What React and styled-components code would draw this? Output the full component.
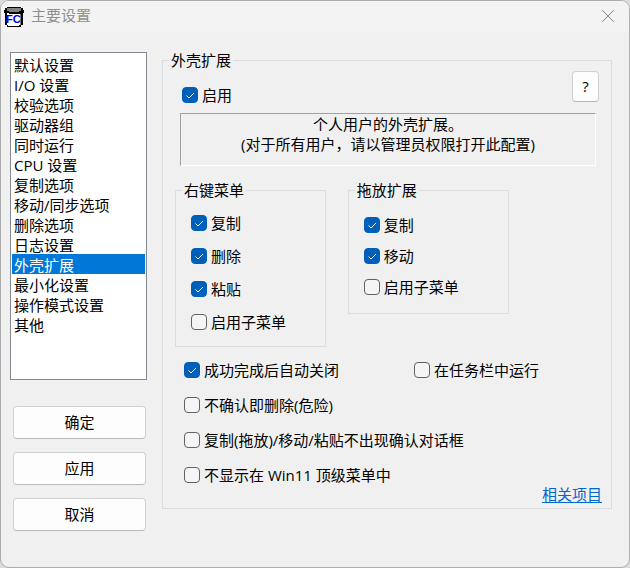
import React, { useState } from "react";
import styled, { createGlobalStyle } from "styled-components";

const GlobalStyle = createGlobalStyle`
  * {
    box-sizing: border-box;
  }
  body {
    margin: 0;
    background: #dcdcdc;
    color: #000;
    font-family: "Open Sans", "Noto Sans CJK SC", sans-serif;
    font-size: 15px;
    line-height: 20px;
  }
  button, select, input {
    font: inherit;
    color: inherit;
  }
`;

const Window = styled.div`
  display: flex;
  flex-direction: column;
  min-height: 100vh;
  background: #f0f0f0;
  border: 1px solid #adadad;
  border-radius: 9px;
  overflow: hidden;
`;

const TitleBar = styled.header`
  display: flex;
  align-items: center;
  gap: 7px;
  height: 31px;
  padding: 0 14px 0 3px;
  background: #f3f3f3;
`;

const Title = styled.h1`
  flex: 1;
  margin: 0;
  padding-bottom: 4px;
  font-size: 15px;
  font-weight: 400;
  color: #8f8f8f;
`;

const CloseButton = styled.button`
  display: flex;
  padding: 0 0 2px;
  border: 0;
  background: none;
`;

const Body = styled.main`
  display: flex;
  align-items: flex-start;
  gap: 15px;
  padding: 18px 17px 36px 9px;
`;

const Sidebar = styled.nav`
  display: flex;
  flex-direction: column;
  flex: 0 0 137px;
  gap: 26px;
  padding-top: 2px;
`;

const PageList = styled.select`
  width: 100%;
  height: 328px;
  padding: 1px;
  border: 1px solid #828790;
  border-radius: 0;
  background: #fff;
  outline: none;
  overflow: hidden;
  scrollbar-width: none;
`;

const PageOption = styled.option`
  height: 20px;
  min-height: 20px;
  padding: 0 2px 2px;
  line-height: 18px;

  &:checked {
    background: #0078d7 linear-gradient(#0078d7, #0078d7);
    color: #fff;
    -webkit-text-fill-color: #fff;
  }
`;

const Actions = styled.div`
  display: flex;
  flex-direction: column;
  gap: 13px;
  padding: 0 1px 0 3px;
`;

const Button = styled.button`
  height: 33px;
  padding: 0 0 2px;
  border: 1px solid #d0d0d0;
  border-bottom-color: #b9b9b9;
  border-radius: 4px;
  background: #fdfdfd;
`;

const HelpButton = styled(Button)`
  width: 27px;
  height: 31px;
  margin-bottom: 3px;
`;

const Group = styled.fieldset`
  min-width: 0;
  margin: 0;
  padding: 0;
  border: 1px solid #dcdcdc;
`;

const Legend = styled.legend`
  margin-left: 6px;
  padding: 0 2px;
`;

const Panel = styled(Group)`
  flex: 1;
`;

const PanelHeader = styled.div`
  display: flex;
  align-items: flex-end;
  justify-content: space-between;
  padding: 1px 12px 0 19px;
`;

const Notice = styled.p`
  min-height: 53px;
  margin: 8px 15px 0 17px;
  border: 1px solid;
  border-color: #a0a0a0 #fff #fff #a0a0a0;
  text-align: center;
`;

const GroupRow = styled.div`
  display: grid;
  grid-template-columns: 15fr 16fr 8fr;
  align-items: start;
  gap: 22px;
  margin-top: 14px;
  padding-left: 12px;
`;

const CheckList = styled.div`
  display: flex;
  flex-direction: column;
  gap: ${(props) => (props.$dense ? 11 : 13)}px;
  padding: ${(props) => (props.$dense ? "15px 15px 16px" : "13px 15px 14px")};
`;

const Options = styled.div`
  display: grid;
  grid-template-columns: 7fr 6fr;
  row-gap: 15px;
  margin-top: 13px;
  padding-left: 21px;
`;

const CheckLabel = styled.label`
  display: flex;
  align-items: center;
  gap: 4px;
  grid-column: ${(props) => (props.$wide ? "1 / -1" : "auto")};
  white-space: nowrap;
`;

const CheckBox = styled.span`
  display: grid;
  width: 16px;
  height: 16px;

  > * {
    grid-area: 1 / 1;
  }
  svg {
    pointer-events: none;
  }
`;

const CheckInput = styled.input`
  appearance: none;
  width: 16px;
  height: 16px;
  margin: 0;
  border: 1px solid #626262;
  border-radius: 4px;
  background: #f5f5f5;

  &:checked {
    border-color: #005fb8;
    background: #005fb8;
  }
`;

const PanelFooter = styled.div`
  display: flex;
  justify-content: flex-end;
  padding: 0 9px 5px;
  line-height: 18px;
`;

const Link = styled.a`
  color: #0066cc;
  text-underline-offset: 2px;
`;

const pages = [
  "默认设置",
  "I/O 设置",
  "校验选项",
  "驱动器组",
  "同时运行",
  "CPU 设置",
  "复制选项",
  "移动/同步选项",
  "删除选项",
  "日志设置",
  "外壳扩展",
  "最小化设置",
  "操作模式设置",
  "其他",
];

const AppIcon = () => (
  <svg
    width="20"
    height="20"
    viewBox="0 0 20 20"
    shapeRendering="crispEdges"
    aria-hidden="true"
  >
    <path d="M3 0h14v1h2v2h1v3h-1v12h-2v2H3v-2H1V6H0V3h1V1h2z" fill="#000" />
    <path d="M3 1h14v3h-2v1H5V4H3z" fill="#808080" />
    <path d="M3 6h2v1h11v11h-1v1H4v-1H3z" fill="#fff" />
    <path d="M16 7h1v11h-1z" fill="#808080" />
    <text
      x="2"
      y="16"
      fill="#0000f0"
      fontFamily="Liberation Sans, sans-serif"
      fontSize="11"
      fontWeight="700"
    >
      FC
    </text>
  </svg>
);

function Check({ label, name, checked, onChange, wide }) {
  return (
    <CheckLabel $wide={wide}>
      <CheckBox>
        <CheckInput
          type="checkbox"
          name={name}
          checked={checked}
          onChange={onChange}
        />
        {checked ? (
          <svg width="16" height="16" viewBox="0 0 16 16" aria-hidden="true">
            <path
              d="M4.5 8.5l2.5 2.5 5-5"
              fill="none"
              stroke="#fff"
              strokeWidth="1"
            />
          </svg>
        ) : null}
      </CheckBox>
      {label}
    </CheckLabel>
  );
}

export default function App() {
  const [page, setPage] = useState("外壳扩展");
  const [settings, setSettings] = useState({
    enabled: true,
    menuCopy: true,
    menuDelete: true,
    menuPaste: true,
    menuSub: false,
    dropCopy: true,
    dropMove: true,
    dropSub: false,
    autoClose: true,
    taskbar: false,
    noConfirmDelete: false,
    noConfirmCopy: false,
    hideTopMenu: false,
  });

  const changeHandler = (e) => {
    setSettings({ ...settings, [e.target.name]: e.target.checked });
  };

  const field = (name) => ({
    name,
    checked: settings[name],
    onChange: changeHandler,
  });

  return (
    <>
      <GlobalStyle />
      <Window>
        <TitleBar>
          <AppIcon />
          <Title>主要设置</Title>
          <CloseButton type="button" aria-label="关闭">
            <svg width="14" height="14" viewBox="0 0 14 14">
              <path d="M1 1l12 12M13 1L1 13" stroke="#8a8a8a" fill="none" />
            </svg>
          </CloseButton>
        </TitleBar>
        <Body>
          <Sidebar>
            <PageList
              size={16}
              aria-label="主要设置"
              value={page}
              onChange={(e) => setPage(e.target.value)}
            >
              {pages.map((name) => (
                <PageOption key={name} value={name}>
                  {name}
                </PageOption>
              ))}
            </PageList>
            <Actions>
              <Button type="button">确定</Button>
              <Button type="button">应用</Button>
              <Button type="button">取消</Button>
            </Actions>
          </Sidebar>
          <Panel>
            <Legend>外壳扩展</Legend>
            <PanelHeader>
              <Check label="启用" {...field("enabled")} />
              <HelpButton type="button">?</HelpButton>
            </PanelHeader>
            <Notice>
              个人用户的外壳扩展。
              <br />
              (对于所有用户，请以管理员权限打开此配置)
            </Notice>
            <GroupRow>
              <Group>
                <Legend>右键菜单</Legend>
                <CheckList>
                  <Check label="复制" {...field("menuCopy")} />
                  <Check label="删除" {...field("menuDelete")} />
                  <Check label="粘贴" {...field("menuPaste")} />
                  <Check label="启用子菜单" {...field("menuSub")} />
                </CheckList>
              </Group>
              <Group>
                <Legend>拖放扩展</Legend>
                <CheckList $dense>
                  <Check label="复制" {...field("dropCopy")} />
                  <Check label="移动" {...field("dropMove")} />
                  <Check label="启用子菜单" {...field("dropSub")} />
                </CheckList>
              </Group>
            </GroupRow>
            <Options>
              <Check label="成功完成后自动关闭" {...field("autoClose")} />
              <Check label="在任务栏中运行" {...field("taskbar")} />
              <Check
                wide
                label="不确认即删除(危险)"
                {...field("noConfirmDelete")}
              />
              <Check
                wide
                label="复制(拖放)/移动/粘贴不出现确认对话框"
                {...field("noConfirmCopy")}
              />
              <Check
                wide
                label="不显示在 Win11 顶级菜单中"
                {...field("hideTopMenu")}
              />
            </Options>
            <PanelFooter>
              <Link href="#related">相关项目</Link>
            </PanelFooter>
          </Panel>
        </Body>
      </Window>
    </>
  );
}
